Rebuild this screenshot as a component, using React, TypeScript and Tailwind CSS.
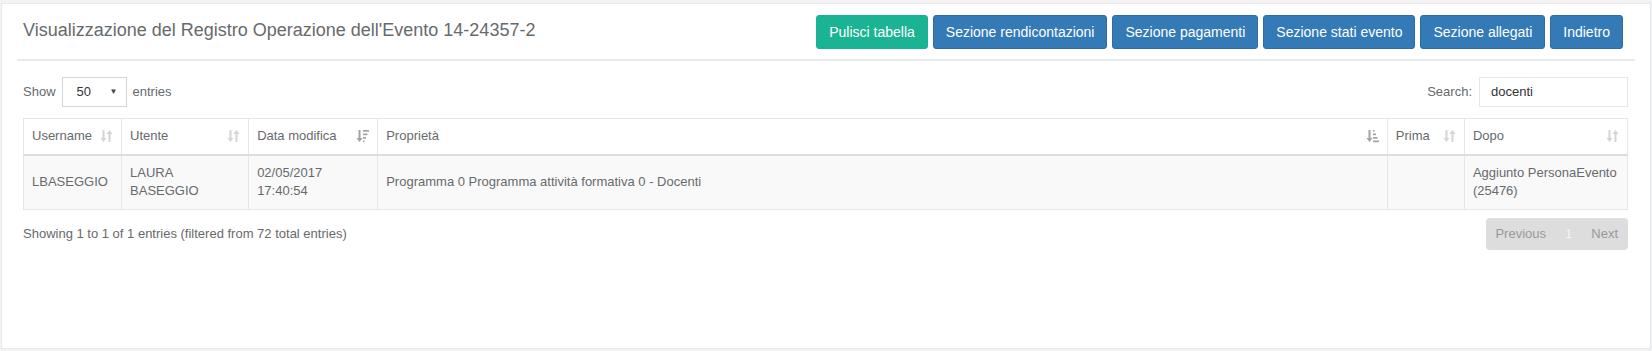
import React from "react";

type SortState = "both" | "asc" | "desc";

const columns: { label: string; width: string; sort: SortState }[] = [
	{ label: "Username", width: "w-[98px]", sort: "both" },
	{ label: "Utente", width: "w-[127px]", sort: "both" },
	{ label: "Data modifica", width: "w-[129px]", sort: "desc" },
	{ label: "Proprietà", width: "w-[1009px]", sort: "asc" },
	{ label: "Prima", width: "w-[77px]", sort: "both" },
	{ label: "Dopo", width: "w-[163px]", sort: "both" },
];

const buttons = [
	{ label: "Pulisci tabella", green: true },
	{ label: "Sezione rendicontazioni" },
	{ label: "Sezione pagamenti" },
	{ label: "Sezione stati evento" },
	{ label: "Sezione allegati" },
	{ label: "Indietro" },
];

function SortIcon({ sort }: { sort: SortState }) {
	if (sort === "both") {
		return (
			<svg width="13" height="14" viewBox="0 0 13 14" className="text-[#d4d4d4] shrink-0">
				<path d="M2.5 1h2v8h2l-3 4-3-4h2z" fill="currentColor" />
				<path d="M8.5 13h2V5h2l-3-4-3 4h2z" fill="currentColor" />
			</svg>
		);
	}
	// bars next to a down arrow; desc = long bar on top, asc = long bar at bottom
	const bars =
		sort === "desc"
			? [
					[7, 1, 6],
					[7, 4.5, 4.5],
					[7, 8, 3],
					[7, 11.5, 1.5],
				]
			: [
					[7, 1, 1.5],
					[7, 4.5, 3],
					[7, 8, 4.5],
					[7, 11.5, 6],
				];
	return (
		<svg width="13" height="14" viewBox="0 0 13 14" className="text-[#a3a3a3] shrink-0">
			<path d="M2.5 1h2v8h2l-3 4-3-4h2z" fill="currentColor" />
			{bars.map(([x, y, w], i) => (
				<rect key={i} x={x} y={y} width={w} height="1.7" fill="currentColor" />
			))}
		</svg>
	);
}

export default function App() {
	return (
		<div
			className="min-h-screen bg-[#f3f3f4] pt-[3px] pl-[1px] pr-[1px] text-[13px] text-[#676a6c]"
			style={{ fontFamily: '"Liberation Sans", Arial, sans-serif' }}
		>
			<div className="h-[346px] bg-white border border-[#e7eaec] px-[15px]">
				{/* Title bar */}
				<div className="flex justify-between items-start pt-[11px] pb-[10px] border-b-2 border-[#e7eaec]">
					<h5 className="pl-[6px] pt-[5px] text-[18px] leading-[20px] font-normal">
						Visualizzazione del Registro Operazione dell'Evento 14-24357-2
					</h5>
					<div className="flex gap-[5px] mr-[12px]">
						{buttons.map((b) => (
							<button
								key={b.label}
								className={
									b.green
										? "h-[34px] px-[12px] rounded-[3px] border border-[#1ab394] bg-[#1ab394] text-white text-[14px] leading-[20px]"
										: "h-[34px] px-[12px] rounded-[3px] border border-[#2e6da4] bg-[#337ab7] text-white text-[14px] leading-[20px]"
								}
							>
								{b.label}
							</button>
						))}
					</div>
				</div>

				<div className="pl-[6px] pr-[7px]">
					{/* Length + search */}
					<div className="mt-[16px] flex justify-between items-center h-[30px]">
						<div className="flex items-center gap-[6px]">
							<span>Show</span>
							<div className="w-[65px] h-[30px] border border-[#d5d5d5] flex items-center justify-between pl-[14px] pr-[8px] text-[#333]">
								<span>50</span>
								<span className="text-[8px] text-[#444]">▼</span>
							</div>
							<span>entries</span>
						</div>
						<div className="flex items-center gap-[7px]">
							<span>Search:</span>
							<div className="w-[149px] h-[30px] border border-[#e5e6e7] flex items-center pl-[11px] text-[#333]">
								docenti
							</div>
						</div>
					</div>

					{/* Table */}
					<table className="mt-[11px] w-full table-fixed border-collapse leading-[18.57px]">
						<thead>
							<tr>
								{columns.map((c) => (
									<th
										key={c.label}
										className={`${c.width} border border-[#e7e7e7] border-b-2 border-b-[#dddddd] px-[8px] py-[8px] text-left font-normal align-middle`}
									>
										<div className="flex items-center justify-between">
											<span>{c.label}</span>
											<SortIcon sort={c.sort} />
										</div>
									</th>
								))}
							</tr>
						</thead>
						<tbody>
							<tr className="bg-[#f9f9f9]">
								<td className="border border-[#e7e7e7] p-[8px] align-middle">LBASEGGIO</td>
								<td className="border border-[#e7e7e7] p-[8px] align-middle">LAURA BASEGGIO</td>
								<td className="border border-[#e7e7e7] p-[8px] align-middle">02/05/2017 17:40:54</td>
								<td className="border border-[#e7e7e7] p-[8px] align-middle">
									Programma 0 Programma attività formativa 0 - Docenti
								</td>
								<td className="border border-[#e7e7e7] p-[8px] align-middle"></td>
								<td className="border border-[#e7e7e7] p-[8px] align-middle">
									Aggiunto PersonaEvento (25476)
								</td>
							</tr>
						</tbody>
					</table>

					{/* Info + pagination */}
					<div className="mt-[8px] flex justify-between items-center">
						<span>Showing 1 to 1 of 1 entries (filtered from 72 total entries)</span>
						<div className="h-[32px] flex items-center rounded-[4px] bg-[#dddddd] pl-[9px] pr-[10px] gap-[19px] text-[#999]">
							<span>Previous</span>
							<span className="text-[#f4f4f4]">1</span>
							<span>Next</span>
						</div>
					</div>
				</div>
			</div>
		</div>
	);
}
